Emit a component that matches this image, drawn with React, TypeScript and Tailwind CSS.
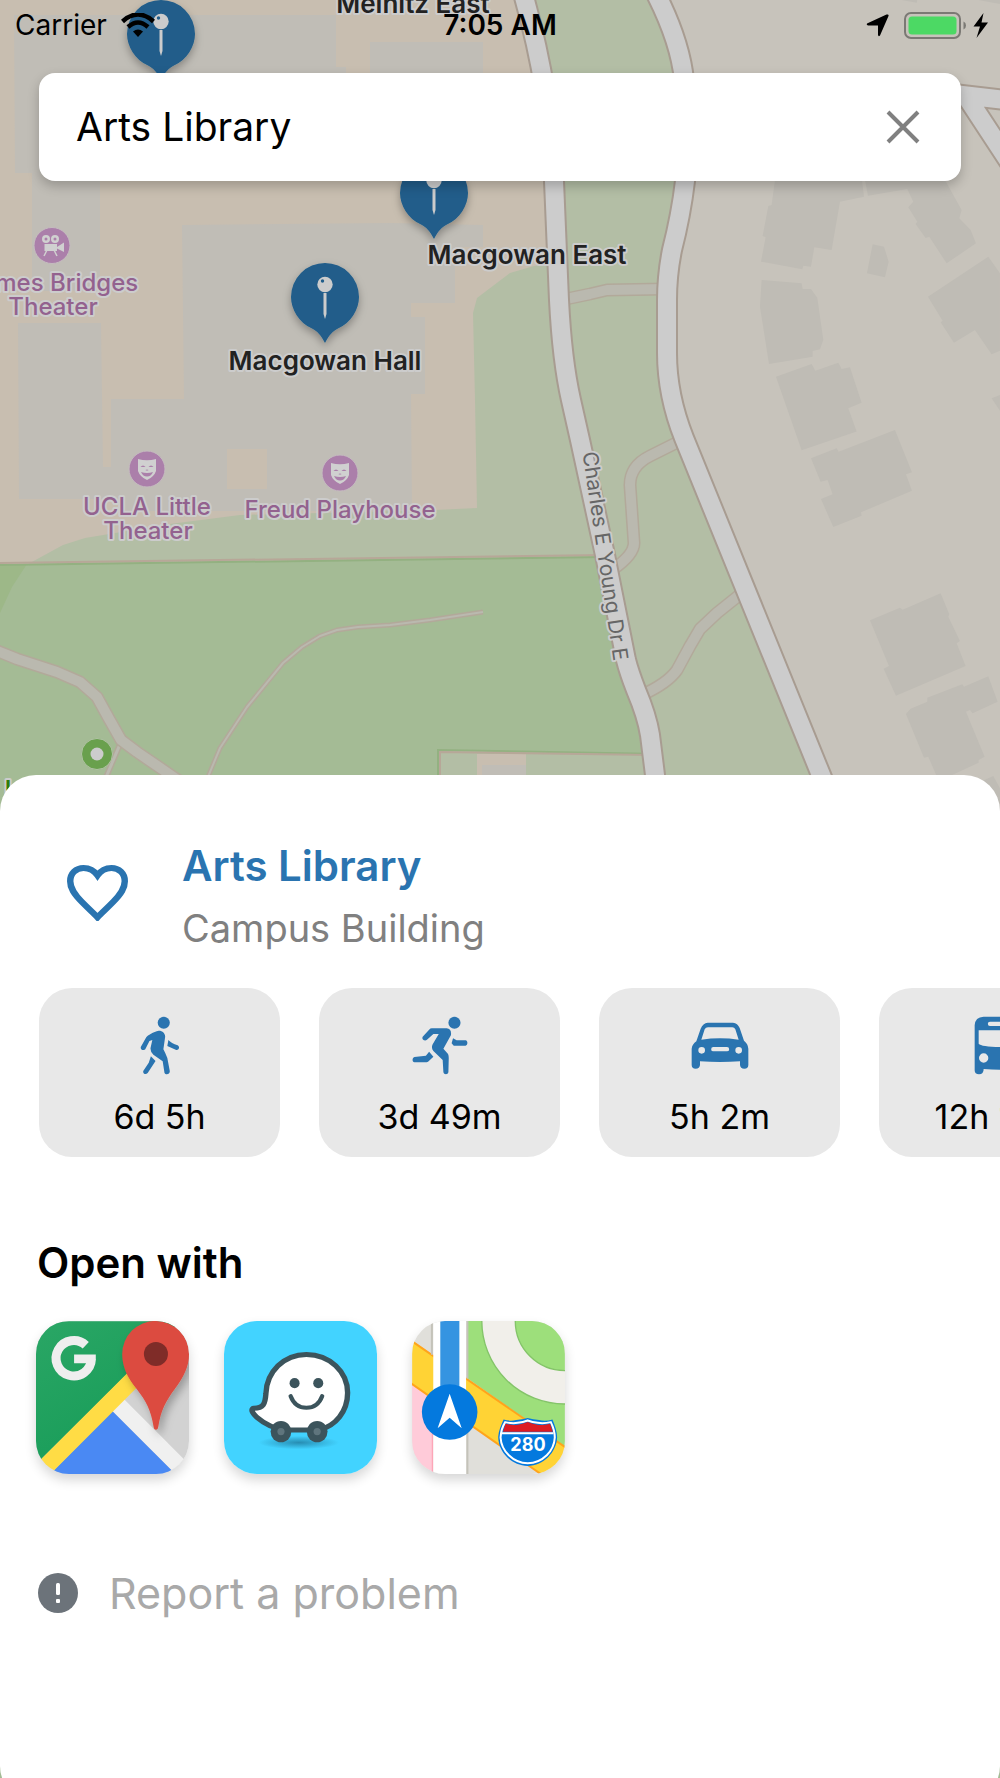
import React, { useState } from 'react'

const park = '#a4bb95'
const lawn = '#b3bea5'
const campus = '#c8beb0'
const block = '#c0bdb6'

function Road({ d, width, casing, fill }: { d: string; width: number; casing: string; fill: string }) {
  return (
    <g fill="none" strokeLinejoin="round">
      <path d={d} stroke={casing} strokeWidth={width + 3} />
      <path d={d} stroke={fill} strokeWidth={width} />
    </g>
  )
}

function Pin({ x, y }: { x: number; y: number }) {
  return (
    <g transform={`translate(${x} ${y})`}>
      <path
        d="M0 46C-4 38-8 34-13 31.500C-26 26-34 12-34 0A34 34 0 1 1 34 0C34 12 26 26 13 31.500C8 34 4 38 0 46Z"
        fill="#205d8a"
        filter="url(#pin-shadow)"
      />
      <circle cy="-12.500" r="7.700" fill="#ccc" />
      <circle cx="-2.500" cy="-16" r="1.700" fill="#205d8a" />
      <path d="M-1.500-4H1.500V17L0 22L-1.500 17Z" fill="#ccc" />
    </g>
  )
}

function Mask({ x, y }: { x: number; y: number }) {
  return (
    <g transform={`translate(${x} ${y})`}>
      <circle r="18" fill="#ab7faa" stroke="#c5bcc0" strokeWidth="1" />
      <path d="M-9-10Q0-7.500 9-10V2Q7 8 0 11Q-7 8-9 2Z" fill="#d0d0d0" />
      <path
        d="M-6.500-2Q-4-5-1.500-2ZM1.500-2Q4-5 6.500-2ZM-6 3Q0 5 6 3Q4 7.500 0 7.500Q-4 7.500-6 3ZM-1.500 1Q0 2 1.500 1Q0 0-1.500 1Z"
        fill="#ab7faa"
      />
    </g>
  )
}

function CampusMap() {
  return (
    <svg
      className="absolute inset-x-0 top-0 h-[820px] w-full"
      viewBox="0 0 1000 820"
      preserveAspectRatio="xMidYMin slice"
      fontFamily="Inter, sans-serif"
      role="img"
      aria-label="Campus map"
    >
      <defs>
        <filter id="pin-shadow" x="-30%" y="-30%" width="160%" height="160%">
          <feDropShadow dx="0" dy="4" stdDeviation="4" floodOpacity="0.3" />
        </filter>
      </defs>
      <rect width="1000" height="820" fill={campus} />

      {/* lawns and park */}
      <path
        d="M526 0L544 72L554 181L556 263L534 266L510 273L477 298L473 313L475 400L477 508L435 510L240 515L170 524L85 538L63 545L30 563L12 587L0 613V820H850L684 438L667 353L670 260L685 181L683 72L659 0Z"
        fill={lawn}
      />
      <path d="M659 0L681 60L685 181L667 290L674 400L684 438L840 820H1000V0Z" fill="#c7c3bb" />
      <path d="M0 564L605 556L656 820H0Z" fill={park} />
      <path d="M0 564H27L12 587L0 613Z" fill="#9db888" />
      <path d="M0 565L605 557" stroke="#93b181" strokeWidth="2" />
      <path d="M0 563L605 555" stroke="#b7a798" strokeWidth="2" />
      <path d="M438 820V750L660 754V820Z" fill={lawn} stroke="#93b181" strokeWidth="2" />
      <path d="M477 754H526V820H477Z" fill={campus} />
      <path d="M482 765H526V820H482Z" fill={block} />
      <path d="M440 820V752L655 755" fill="none" stroke="#b7a798" strokeWidth="2" />

      {/* campus buildings */}
      <g fill={block}>
        <path d="M14 15H336V67H346V175H100V291H32V173H15Z" />
        <path d="M370 42H483V150H370Z" />
        <path
          fillRule="evenodd"
          d="M182 225L390 223L483 225V247H455V303H411V317H425V394H411L412 511H120V499H19L18 323H101L103 467H111V399H184ZM227 449V489H267V449Z"
        />
      </g>

      {/* residential buildings */}
      <g fill="#bfbcb5">
        <g transform="translate(500 0) scale(.3333)">
          <path d="M825 540H1086L1092 590L1020 605L995 750L943 742L933 800L910 797L907 808L783 785L797 712L788 708L805 618L815 615Z" />
          <path d="M1095 540H1335L1385 630L1378 655L1412 690L1428 730L1340 790L1288 710L1277 714L1247 672L1252 665L1225 622L1240 605L1222 567L1104 587Z" />
          <path d="M1118 733L1152 740L1166 785L1155 832L1101 820Z" />
          <path d="M1465 770L1500 820V1052L1475 1063L1425 990L1362 1028L1322 967L1328 962L1284 890Z" />
          <path d="M785 840L905 850L908 867L933 867L952 893L970 1020L960 1048L938 1053V1070L807 1092L780 920Z" />
          <path d="M828 1130L935 1092L946 1112L1015 1088L1025 1107L1050 1102L1085 1208L1045 1225L1070 1295L905 1351Z" />
          <path d="M1475 1195L1500 1185V1232ZM1205 0H1252L1250 8ZM1435 0H1500V12Z" />
        </g>
        <g transform="translate(500 400) scale(.3333)">
          <path d="M933 175L1010 145L1016 155L1185 90L1236 217L1218 223L1236 272L1083 337L1085 347L1000 381L963 297L998 283L983 240L962 245Z" />
          <path d="M1110 661L1200 623L1208 629L1322 580L1348 643L1345 650L1380 723L1370 730L1397 798L1188 887L1151 806L1167 798Z" />
          <path d="M1218 942L1232 926L1282 905V893L1387 853L1392 860L1465 829L1493 905L1418 940L1410 930L1398 935L1454 1070L1436 1080V1088L1350 1128H1310L1285 1070L1272 1073Z" />
          <path d="M1440 1146L1480 1128L1500 1165V1260Z" />
        </g>
      </g>

      {/* footpaths */}
      <Road d="M566 299L590 294L607 290L665 289" width={10} casing="#b2a99a" fill="#bab9af" />
      <Road d="M680 441L650 456Q630 466 630 485L634 543Q634 555 612 570" width={10} casing="#b2a99a" fill="#bab9af" />
      <Road d="M742 593L717 613L700 629L690 646L677 670Q668 683 642 695" width={10} casing="#b2a99a" fill="#bab9af" />
      <Road d="M121 742L104 782" width={3} casing="#b2a99a" fill="#bab9af" />
      <Road d="M-5 650L17 659L57 672L80 682L97 697L108 717L121 740L137 752L172 776L200 795" width={10} casing="#b2a99a" fill="#bab9af" />
      <Road d="M205 784L220 748L247 707L283 663L302 647L320 636L337 630L358 627L390 625L430 620L483 612" width={2} casing="#b2a99a" fill="#bab9af" />

      {/* streets */}
      <g fill="none" stroke="#a89c91" strokeWidth="22" strokeLinejoin="round">
        <path d="M522-10Q550 86 554 181L559 300Q562 360 571 400L580 440L605 555L626 660Q629 672 636 690Q647 716 650 735L655 775V830" />
        <path d="M654-10Q680 40 684 80Q690 130 685 181Q681 215 672 250Q667 275 667 300V353Q667 395 684 438L821 775L840 822" />
        <path d="M945 93L1005 100M968 99L1010 163" />
      </g>
      <g fill="none" stroke="#ccc" strokeWidth="18" strokeLinejoin="round">
        <path d="M522-10Q550 86 554 181L559 300Q562 360 571 400L580 440L605 555L626 660Q629 672 636 690Q647 716 650 735L655 775V830" />
        <path d="M654-10Q680 40 684 80Q690 130 685 181Q681 215 672 250Q667 275 667 300V353Q667 395 684 438L821 775L840 822" />
        <path d="M945 93L1005 100M968 99L1010 163" />
      </g>

      <Pin x={161} y={34} />
      <Pin x={434} y={193} />
      <Pin x={325} y={297} />

      <circle cx="52" cy="245.500" r="18" fill="#ab7faa" stroke="#c5bcc0" strokeWidth="1" />
      <g fill="#d0d0d0">
        <path d="M44.500 244H57V247L64 242.500V252L57 248.500V251H44.500Z" />
        <path d="M47 250L44 256M54 250L57 256" stroke="#d0d0d0" strokeWidth="1.500" />
        <path
          fillRule="evenodd"
          d="M42 239a4 4 0 1 0 8 0a4 4 0 1 0-8 0M44.500 239a1.500 1.500 0 1 0 3 0a1.500 1.500 0 1 0-3 0M51 239a4 4 0 1 0 8 0a4 4 0 1 0-8 0M53.500 239a1.500 1.500 0 1 0 3 0a1.500 1.500 0 1 0-3 0"
        />
      </g>
      <Mask x={147} y={469} />
      <Mask x={340} y={473} />
      <circle cx="97" cy="754" r="15.500" fill="#69a04d" stroke="#b0c2a4" strokeWidth="1" />
      <circle cx="97" cy="754" r="6.500" fill="#ccc" />

      <g textAnchor="middle" strokeLinejoin="round" stroke="#ccc" strokeWidth="4" paintOrder="stroke" fontWeight="600" fontSize="26">
        <g fill="#222">
          <text x="413" y="13">Melnitz East</text>
          <text x="527" y="264">Macgowan East</text>
          <text x="325" y="370">Macgowan Hall</text>
        </g>
        <g fill="#93628f" fontSize="24" fontWeight="500">
          <text x="53" y="291">James Bridges</text>
          <text x="53" y="315">Theater</text>
          <text x="147" y="515">UCLA Little</text>
          <text x="148" y="539">Theater</text>
          <text x="340" y="518">Freud Playhouse</text>
        </g>
        <text x="8" y="798" fill="#2f7d0a" fontSize="24">I</text>
        <text transform="translate(598 557) rotate(81.500)" fill="#666" fontSize="21" fontWeight="400">
          Charles E Young Dr E
        </text>
      </g>
    </svg>
  )
}

function StatusBar() {
  return (
    <header className="relative grid grid-cols-3 items-center px-[15px] pt-2 text-[28px] leading-[34px] text-black">
      <div className="flex items-center gap-3.5">
        <span>Carrier</span>
        <svg className="h-[25px] w-[34px]" viewBox="0 0 34 25" fill="none" stroke="#000" aria-label="Wi-Fi">
          <path d="M1.500 8.500Q17-5.500 32.500 8.500" strokeWidth="4.500" />
          <path d="M7 14Q17 5 27 14" strokeWidth="4.500" />
          <path d="M12 18.500Q17 14.500 22 18.500L17 24Z" fill="#000" stroke="none" />
        </svg>
      </div>
      <span className="text-center font-semibold">7:05 AM</span>
      <div className="flex items-center justify-end">
        <svg className="mr-[15px] h-[23px] w-[23px]" viewBox="0 0 23 23" aria-label="Location">
          <path d="M22 .5Q23 1 22.500 2L14 21.500Q12.500 23 12 21V11.500H2Q0 11 1 9.500L20.500.5Z" />
        </svg>
        <svg className="h-[27px] w-[64px]" viewBox="0 0 64 27" aria-label="Battery">
          <rect x="1" y="1" width="55" height="25" rx="6" fill="none" stroke="#7b7974" strokeWidth="2" />
          <rect x="4.500" y="4.500" width="48" height="18" rx="3.500" fill="#4cd964" />
          <path d="M59.500 9.500Q62 10.500 62 13.500Q62 16.500 59.500 17.500Z" fill="#7b7974" />
        </svg>
        <svg className="ml-[5px] -mr-[3px] h-[25px] w-[15px]" viewBox="0 0 15 25" aria-label="Charging">
          <path d="M10.500 0L.5 13.500H7L3.500 25L15 9.500H8.500Z" />
        </svg>
      </div>
    </header>
  )
}

const blue = '#2a74b0'

function HeartIcon() {
  return (
    <svg className="h-[56px] w-[61px]" viewBox="189 195 170 166" preserveAspectRatio="none" aria-hidden="true">
      <path
        d="M274 350C266 340 250 326 230 304C208 280 198 264 198 243C198 220 214 204 235 204C251 204 265 212 274 226C283 212 297 204 313 204C334 204 350 220 350 243C350 264 340 280 318 304C298 326 282 340 274 350Z"
        fill="none"
        stroke={blue}
        strokeWidth="18"
      />
    </svg>
  )
}

function WalkIcon() {
  return (
    <svg className="h-[59px] w-[60px]" viewBox="362.500 650 168 177" preserveAspectRatio="none" fill={blue} aria-hidden="true">
      <ellipse cx="457" cy="670" rx="17" ry="18" />
      <path d="M408 714C412 707 428 698 443 694C454 694 461 702 461 712L456 750Q462 762 467 776L474 816C474 826 462 828 459 820L454 786L428 766Q419 758 420 746L425 722L417 725L406 748C402 756 390 752 393 742Z" />
      <path d="M470 722Q478 732 496 738C504 744 498 754 492 752L467 740Z" />
      <path d="M421 771L434 785L412 821C406 828 397 822 400 814L415 790Z" />
    </svg>
  )
}

function RunIcon() {
  return (
    <svg className="h-[59px] w-[60px]" viewBox="1147.500 650 168 177" preserveAspectRatio="none" fill={blue} aria-hidden="true">
      <ellipse cx="1272" cy="670" rx="17" ry="18" />
      <path d="M1209 687H1250C1260 688 1264 696 1262 708L1241 748L1254 764Q1256 768 1256 776L1255 818C1254 827 1242 827 1241 818L1239 782L1213 755Q1206 746 1211 735L1228 704H1213L1195 721C1189 727 1179 720 1183 712L1201 691Q1204 687 1209 687Z" />
      <path d="M1268 717L1278 723H1303C1310 724 1310 738 1303 739H1270L1264 732Z" />
      <path d="M1201 757L1213 772L1198 787L1194 789H1160C1153 788 1153 775 1160 773L1192 769Z" />
    </svg>
  )
}

function CarIcon() {
  return (
    <svg className="h-[59px] w-[60px]" viewBox="389 169 180 177" fill={blue} aria-hidden="true">
      <path
        fillRule="evenodd"
        d="M394 267Q396 253 408 245L421 207Q428 190 442 189H518Q532 190 538 205L551 243Q563 252 564 267V316Q564 327 552 327Q540 327 539 316V305Q479 309 419 305V316Q418 327 406 327Q394 327 394 316ZM443 203Q436 203 433 209L423 240Q479 232 535 240L525 209Q522 203 516 203ZM414 272a10 10 0 1 0 20 0a10 10 0 1 0-20 0M525 272a10 10 0 1 0 20 0a10 10 0 1 0-20 0M459 262a6.500 6.500 0 0 0 0 13H500a6.500 6.500 0 0 0 0-13Z"
      />
    </svg>
  )
}

function BusIcon() {
  return (
    <svg className="h-[59px] w-[60px]" viewBox="1231 169 180 177" fill={blue} aria-hidden="true">
      <path
        fillRule="evenodd"
        d="M1245 197Q1246 172 1272 171H1370Q1396 172 1397 197V332Q1396 344 1384 344Q1370 344 1370 328Q1321 332 1272 328Q1272 344 1258 344Q1245 344 1245 332ZM1257 212V252Q1265 261 1321 262Q1377 261 1385 252V212ZM1258 295a14 14 0 1 0 28 0a14 14 0 1 0-28 0M1356 295a14 14 0 1 0 28 0a14 14 0 1 0-28 0M1291 186a6.500 6.500 0 0 0 0 13H1351a6.500 6.500 0 0 0 0-13Z"
      />
    </svg>
  )
}

const modes = [
  { name: 'Walk', time: '6d 5h', Icon: WalkIcon },
  { name: 'Run', time: '3d 49m', Icon: RunIcon },
  { name: 'Drive', time: '5h 2m', Icon: CarIcon },
  { name: 'Bus', time: '12h 14m', Icon: BusIcon },
]

function GoogleMapsLogo() {
  return (
    <svg className="h-full w-full" viewBox="48 64 458 457" aria-hidden="true">
      <defs>
        <linearGradient id="gm-green" x1="0" y1="0" x2="0.600" y2="1">
          <stop offset="0" stopColor="#2aa665" />
          <stop offset="1" stopColor="#179c58" />
        </linearGradient>
        <filter id="gm-shadow" x="-40%" y="-20%" width="180%" height="150%">
          <feDropShadow dx="10" dy="14" stdDeviation="12" floodOpacity="0.28" />
        </filter>
      </defs>
      <path d="M48 64H506V521H48Z" fill="#d2d2d2" />
      <path d="M48 64H480L48 492Z" fill="url(#gm-green)" />
      <path d="M277 333L470 526H86Z" fill="#4a89f3" />
      <path d="M311 297L277 333L462 518H506V492Z" fill="#f0f0f0" />
      <path d="M324 217L48 492V521H92L380 233Z" fill="#ffdc45" />
      <path
        d="M407 389Q401 389 400 380C392 330 378 304 350 268C322 234 306 200 306 163A100 100 0 0 1 506 163C506 200 490 232 464 266C436 304 422 330 414 380Q413 389 407 389Z"
        fill="#dc4b3f"
        filter="url(#gm-shadow)"
      />
      <circle cx="407" cy="162" r="36" fill="#7f2c28" />
      <path d="M197 136A53 53 0 1 0 214 177" fill="none" stroke="#eee" strokeWidth="27" />
      <path d="M162 164H227V177H214L205 190H162Z" fill="#eee" />
    </svg>
  )
}

function WazeLogo() {
  return (
    <svg className="h-full w-full" viewBox="573 273 427 458" preserveAspectRatio="none" aria-hidden="true">
      <defs>
        <radialGradient id="wz-shade">
          <stop offset="0" stopColor="#1b6f92" stopOpacity="0.700" />
          <stop offset="1" stopColor="#1b6f92" stopOpacity="0" />
        </radialGradient>
      </defs>
      <path d="M573 273H1000V731H573Z" fill="#42d3ff" />
      <ellipse cx="782" cy="637" rx="112" ry="20" fill="url(#wz-shade)" />
      <path
        d="M803 373C740 373 692 425 690 490C688 520 684 535 654 534C646 540 656 552 664 561C690 585 714 596 744 599H838C884 588 918 544 918 488C918 425 868 373 803 373Z"
        fill="#fff"
        stroke="#3c545c"
        strokeWidth="15"
        strokeLinejoin="round"
      />
      <g fill="#3c545c">
        <ellipse cx="732" cy="604" rx="29" ry="32" />
        <ellipse cx="833" cy="604" rx="29" ry="32" />
        <ellipse cx="770" cy="459" rx="14" ry="15" />
        <ellipse cx="836" cy="459" rx="14" ry="15" />
      </g>
      <ellipse cx="732" cy="604" rx="10" ry="11" fill="#5f757d" />
      <ellipse cx="833" cy="604" rx="10" ry="11" fill="#5f757d" />
      <path d="M759 498Q771 533 803 533Q835 533 847 498" fill="none" stroke="#3c545c" strokeWidth="12" strokeLinecap="round" />
    </svg>
  )
}

function AppleMapsLogo() {
  return (
    <svg className="h-full w-full" viewBox="39 64 456 457" aria-hidden="true">
      <path d="M39 64H495V521H39Z" fill="#e0dfda" />
      <path d="M205 64H495V440L205 236Z" fill="#9ddf7b" />
      <circle cx="495" cy="64" r="198" fill="none" stroke="#f1efea" strokeWidth="100" />
      <circle cx="495" cy="64" r="248" fill="none" stroke="#84c469" strokeWidth="4" />
      <circle cx="495" cy="64" r="148" fill="none" stroke="#84c469" strokeWidth="4" />
      <path d="M39 252L101 296V521H39Z" fill="#ffcbd9" />
      <path d="M100 290V521" stroke="#fda6b8" strokeWidth="5" />
      <path d="M39 122L495 440V570L39 252Z" fill="#ffd335" />
      <path d="M35 122L499 443M35 250L499 574" fill="none" stroke="#ffa41c" strokeWidth="6" />
      <path d="M98 64V165M204 64V236M204 380V521" stroke="#c4c3ba" strokeWidth="6" />
      <path d="M102 64H200V521H102Z" fill="#fff" />
      <path d="M123 64H180V300H123Z" fill="#3594e1" />
      <circle cx="151" cy="336" r="83" fill="#0479de" />
      <path d="M151 281L187 384L151 353L115 384Z" fill="#fff" />
      <path
        d="M312 358Q330 364 350 360Q368 358 384 354Q400 358 418 360Q440 364 458 358C466 378 472 394 472 412C470 456 432 496 384 497C336 496 296 456 296 410C297 392 304 376 312 358Z"
        fill="#0479de"
      />
      <path
        d="M317 366Q338 371 354 368Q370 366 384 361Q398 366 414 368Q432 371 453 366C460 380 465 396 465 412C463 452 430 488 384 489C340 488 305 452 303 412C304 396 308 380 317 366Z"
        fill="#0479de"
        stroke="#fff"
        strokeWidth="6"
      />
      <path d="M318 371Q340 377 355 374Q372 371 384 366Q396 371 413 374Q430 377 451 371L459 395H310Z" fill="#dc1b22" />
      <path d="M307 399H461" stroke="#fff" strokeWidth="6" />
      <text x="385" y="453" textAnchor="middle" fontFamily="Inter, sans-serif" fontSize="54" fontWeight="700" fill="#fff">
        280
      </text>
    </svg>
  )
}

const apps = [
  { name: 'Google Maps', Logo: GoogleMapsLogo },
  { name: 'Waze', Logo: WazeLogo },
  { name: 'Apple Maps', Logo: AppleMapsLogo },
]

export default function App() {
  const [query, setQuery] = useState('Arts Library')
  return (
    <main className="relative min-h-screen overflow-hidden bg-[#a4bb95] font-['Inter',sans-serif] text-black">
      <CampusMap />
      <div className="relative h-[775px]">
        <StatusBar />
        <form
          role="search"
          onSubmit={(e) => e.preventDefault()}
          className="mx-[39px] mt-[31px] flex h-[108px] items-center rounded-2xl bg-white pr-10 pl-[37px] shadow-[0_5px_12px_rgba(0,0,0,0.22)]"
        >
          <input
            aria-label="Search campus"
            value={query}
            onChange={(e) => setQuery(e.target.value)}
            className="min-w-0 flex-1 bg-transparent text-[39px] leading-[48px] outline-none"
          />
          <button type="button" aria-label="Clear search" onClick={() => setQuery('')}>
            <svg className="h-9 w-9" viewBox="0 0 36 36" stroke="#808080" strokeWidth="4">
              <path d="M3 3L33 33M33 3L3 33" />
            </svg>
          </button>
        </form>
      </div>

      <section className="relative -mb-6 min-h-[1027px] rounded-[36px] bg-white pt-16">
        <div className="flex items-center">
          <button type="button" aria-label="Save to favorites" className="ml-[67px] pb-2">
            <HeartIcon />
          </button>
          <div className="ml-[54px]">
            <h1 className="text-[42px] leading-[54px] font-semibold text-[#2a74b0]">Arts Library</h1>
            <p className="mt-2 text-[38px] leading-[54px] text-[#808080]">Campus Building</p>
          </div>
        </div>

        <div className="mt-[33px] flex gap-[39px] overflow-hidden pl-[39px]">
          {modes.map(({ name, time, Icon }) => (
            <button
              key={name}
              type="button"
              aria-label={`${name}, ${time}`}
              className="flex h-[169px] w-[241px] shrink-0 flex-col items-center rounded-[33px] bg-[#e8e8e8] pt-7"
            >
              <Icon />
              <span className="mt-5 text-[34px] leading-[44px]">{time}</span>
            </button>
          ))}
        </div>

        <h2 className="mt-[78px] px-[37px] text-[42px] leading-[56px] font-semibold">Open with</h2>
        <div className="mt-[30px] flex gap-[35px] pl-9">
          {apps.map(({ name, Logo }) => (
            <button
              key={name}
              type="button"
              aria-label={name}
              className="h-[153px] w-[153px] overflow-hidden rounded-[33px] shadow-[0_6px_12px_rgba(0,0,0,0.16)]"
            >
              <Logo />
            </button>
          ))}
        </div>

        <button type="button" className="mt-[91px] ml-[38px] flex items-center gap-[31px] text-[43px] leading-[56px] text-[#a9a9a9]">
          <svg className="h-10 w-10" viewBox="0 0 40 40" aria-hidden="true">
            <circle cx="20" cy="20" r="20" fill="#6c737a" />
            <rect x="18" y="10" width="4" height="12" rx="1.500" fill="#fff" />
            <rect x="18" y="26" width="4" height="4" rx="1" fill="#fff" />
          </svg>
          Report a problem
        </button>
      </section>
    </main>
  )
}
